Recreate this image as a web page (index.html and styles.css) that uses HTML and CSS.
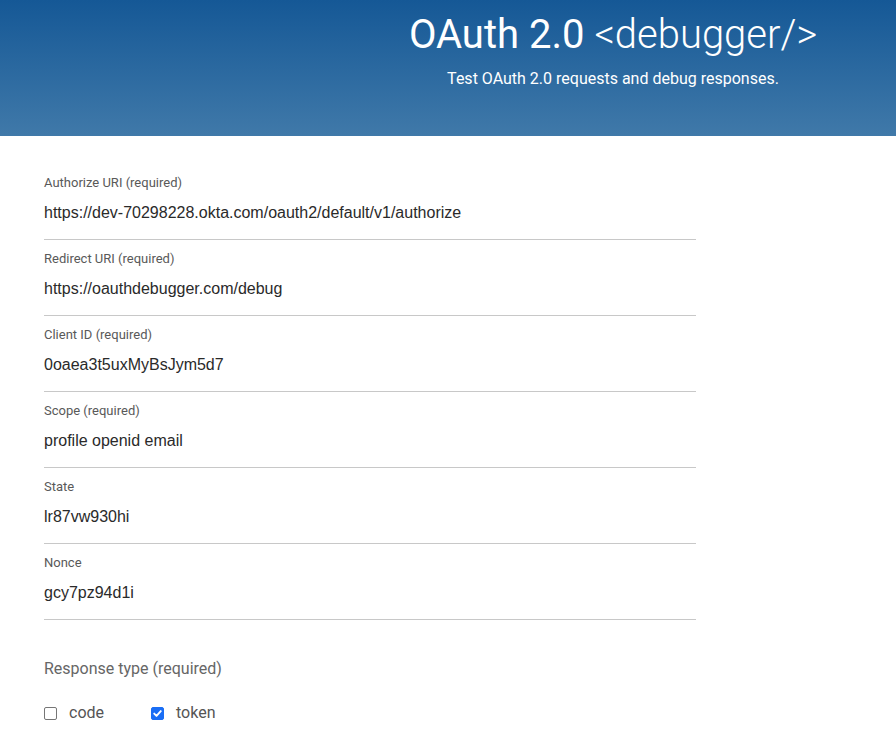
FILE: index.html
```html
<!DOCTYPE html>
<html lang="en">
<head>
<meta charset="utf-8">
<title>OAuth 2.0 debugger</title>
<link rel="stylesheet" href="styles.css">
</head>
<body>
<header class="hero">
  <div class="hero-inner">
    <h1 class="title"><span class="title-strong">OAuth 2.0</span> <span class="title-light">&lt;debugger/&gt;</span></h1>
    <p class="subtitle">Test OAuth 2.0 requests and debug responses.</p>
  </div>
</header>
<main class="form">
  <div class="field">
    <label class="field-label">Authorize URI (required)</label>
    <div class="field-value">https://dev-70298228.okta.com/oauth2/default/v1/authorize</div>
  </div>
  <div class="field">
    <label class="field-label">Redirect URI (required)</label>
    <div class="field-value">https://oauthdebugger.com/debug</div>
  </div>
  <div class="field">
    <label class="field-label">Client ID (required)</label>
    <div class="field-value">0oaea3t5uxMyBsJym5d7</div>
  </div>
  <div class="field">
    <label class="field-label">Scope (required)</label>
    <div class="field-value">profile openid email</div>
  </div>
  <div class="field">
    <label class="field-label">State</label>
    <div class="field-value">lr87vw930hi</div>
  </div>
  <div class="field">
    <label class="field-label">Nonce</label>
    <div class="field-value">gcy7pz94d1i</div>
  </div>
  <div class="response">
    <div class="response-label">Response type (required)</div>
    <div class="checks">
      <label class="check"><span class="box"></span><span class="check-text">code</span></label>
      <label class="check"><span class="box box-checked"><svg width="11" height="11" viewBox="0 0 11 11"><path d="M2.2 5.6 L4.5 7.9 L8.8 3.1" fill="none" stroke="#fff" stroke-width="1.9" stroke-linecap="round" stroke-linejoin="round"/></svg></span><span class="check-text">token</span></label>
    </div>
  </div>
</main>
</body>
</html>
```
FILE: styles.css
```css
html, body {
  margin: 0;
  padding: 0;
  background: #fff;
}
body {
  font-family: Roboto, "Liberation Sans", Arial, sans-serif;
}
.hero {
  height: 136px;
  background: linear-gradient(to bottom, #155896 0%, #4079a9 100%);
  color: #fff;
}
.hero-inner {
  margin-left: 330px;
  width: 566px;
  text-align: center;
  padding-top: 11px;
}
.title {
  margin: 0;
  font-size: 40px;
  line-height: 48px;
  font-weight: 400;
}
.title-light {
  font-weight: 300;
}
.subtitle {
  margin: 10px 0 0;
  font-size: 16px;
  line-height: 20px;
  font-weight: 400;
}
.form {
  margin-left: 44px;
  width: 652px;
  padding-top: 38px;
}
.field {
  border-bottom: 1px solid #c8c8c8;
  margin-bottom: 10px;
}
.field-label {
  display: block;
  font-size: 13px;
  line-height: 18px;
  color: #595959;
}
.field-value {
  font-family: "Liberation Sans", Arial, sans-serif;
  font-size: 16px;
  line-height: 18px;
  color: #2a2a2a;
  padding: 12px 0 17px;
}
.response {
  padding-top: 29px;
}
.response-label {
  font-size: 16px;
  line-height: 20px;
  color: #666;
}
.checks {
  display: flex;
  margin-top: 24px;
}
.check {
  display: flex;
  align-items: center;
  width: 107px;
  font-size: 16px;
  line-height: 20px;
  color: #555;
}
.box {
  width: 11px;
  height: 11px;
  border: 1px solid #767676;
  border-radius: 2px;
  margin-right: 12px;
  display: flex;
  align-items: center;
  justify-content: center;
  background: #fff;
}
.box-checked {
  background: #1a6ef5;
  border-color: #1a6ef5;
}
.box-checked svg {
  display: block;
}
.check-text {
  display: block;
}
```
